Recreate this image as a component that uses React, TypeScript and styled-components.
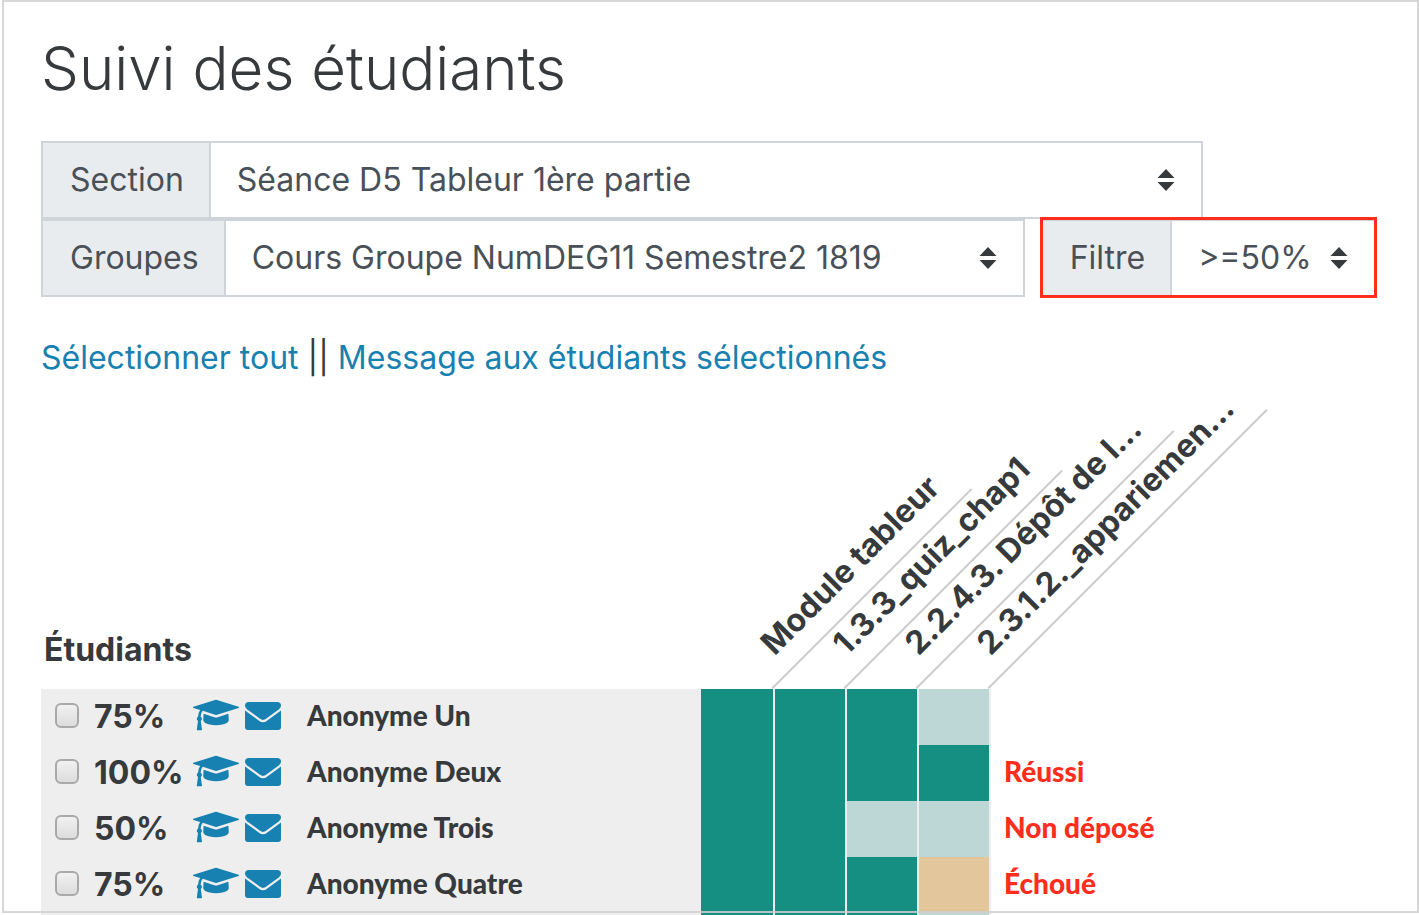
import React from "react";
import styled, { createGlobalStyle } from "styled-components";

const GlobalStyle = createGlobalStyle`
  *, *::before, *::after { box-sizing: border-box; }
  body {
    margin: 0;
    background: #fff;
    color: #373a3c;
    font-family: Inter, "Liberation Sans", sans-serif;
    font-size: 32px;
    line-height: 48px;
  }
`;

const Page = styled.main`
  position: relative;
  min-height: 100vh;
  padding: 29px 41px 0;
  overflow: hidden;

  &::after {
    content: "";
    position: absolute;
    inset: 0 0 2px 2px;
    border: 2px solid rgba(208, 208, 208, 0.85);
    pointer-events: none;
  }
`;

const Title = styled.h1`
  margin: 0 0 34px;
  font-size: 60px;
  font-weight: 300;
  line-height: 78px;
`;

const FilterRow = styled.div`
  display: flex;
  gap: 16px;
`;

const Group = styled.div<{ $marked?: boolean }>`
  position: relative;
  display: flex;
  height: 78px;

  &::after {
    content: "";
    display: ${(p) => (p.$marked ? "block" : "none")};
    position: absolute;
    inset: -2px -1px -1px;
    border: 3px solid #ff2d1c;
    pointer-events: none;
  }
`;

const GroupLabel = styled.label`
  display: flex;
  align-items: center;
  padding: 0 25px 0 27px;
  border: 2px solid #ced4da;
  border-right: 0;
  background: #e9ecef;
  color: #495057;
`;

const SelectBox = styled.div<{ $width: number }>`
  position: relative;
  width: ${(p) => p.$width}px;

  svg {
    position: absolute;
    top: 28px;
    right: 28px;
    pointer-events: none;
  }
`;

const Select = styled.select`
  width: 100%;
  height: 100%;
  padding: 0 26px;
  border: 2px solid #ced4da;
  border-radius: 0;
  appearance: none;
  background: #fff;
  color: #495057;
  font: inherit;
`;

const Actions = styled.nav`
  margin-top: 37px;
`;

const Action = styled.a`
  color: #1781b1;
  text-decoration: none;
`;

const Table = styled.table`
  width: 100%;
  table-layout: fixed;
  border-collapse: separate;
  border-spacing: 0;

  th, td { padding: 0; }
`;

const Col = styled.col<{ $width?: number }>`
  width: ${(p) => (p.$width ? `${p.$width}px` : "auto")};
`;

const StudentHeading = styled.th`
  height: 307px;
  vertical-align: bottom;
  text-align: left;
  font-weight: 700;

  span { display: block; padding: 0 0 15px 3px; }
`;

const ActivityHeading = styled.th`
  vertical-align: bottom;
  text-align: left;
  font-weight: 700;
`;

const SlantAnchor = styled.div`
  width: 0;
  margin: 0 2px 0 auto;
`;

const SlantLabel = styled.div`
  width: max-content;
  padding: 0 22px 7px 24px;
  border-bottom: 2px solid #ccc;
  white-space: nowrap;
  transform: rotate(-45deg);
  transform-origin: 0 100%;
`;

const Student = styled.div`
  display: flex;
  align-items: center;
  height: 56px;
  padding-left: 14px;
  background: #eee;
`;

const Check = styled.input`
  width: 24px;
  height: 25px;
  margin: 0 15px 3px 0;
  border: 2px solid #a9a9a9;
  border-radius: 6px;
  appearance: none;
  background: linear-gradient(#f1f1f1, #dcdcdc);
`;

const Percent = styled.span`
  width: 99px;
  font-weight: 700;
`;

const IconButton = styled.button`
  display: flex;
  margin: 0 6px 4px 0;
  padding: 0;
  border: 0;
  background: none;
  color: #1781b1;
`;

const Name = styled.span`
  margin: 0 0 4px 20px;
  font-family: Lato, sans-serif;
  font-size: 28px;
  font-weight: 900;
`;

const tones = { done: "#168f83", none: "#bdd7d7", failed: "#e3c69c" };
type Tone = keyof typeof tones;

const StatusCell = styled.td<{ $tone: Tone }>`
  border-right: 2px solid #eee;
  background: ${(p) => tones[p.$tone]};
`;

const Note = styled.td`
  color: #ff2d1c;
  font-family: Lato, sans-serif;
  font-size: 28px;
  font-weight: 900;

  span { display: block; padding: 0 0 5px 13px; }
`;

const Strip = styled.td`
  height: 2px;
  background: #eee;
`;

function Sorter() {
  return (
    <svg width="18" height="22" viewBox="0 0 18 22" fill="#373a3c" aria-hidden="true">
      <path d="M9 0L17.5 9H.5zM9 22L.5 13h17z" />
    </svg>
  );
}

function GraduationCap() {
  return (
    <svg width="46" height="36" viewBox="0 0 2304 1792" fill="currentColor" aria-hidden="true">
      <path d="M1774 836l18 316q4 69-82 128t-235 93.5-323 34.5-323-34.5-235-93.5-82-128l18-316 574 181q22 7 48 7t48-7zM2304 512q0 23-22 31l-1120 352q-4 1-10 1t-10-1l-652-206q-43 34-71 111.5t-34 178.5q63 36 63 109 0 69-58 107l58 433q2 14-8 25-9 11-24 11h-192q-15 0-24-11-10-11-8-25l58-433q-58-38-58-107 0-73 65-111 11-207 98-330l-333-104q-22-8-22-31t22-31l1120-352q4-1 10-1t10 1l1120 352q22 8 22 31z" />
    </svg>
  );
}

function Envelope() {
  return (
    <svg width="36" height="36" viewBox="0 0 36 36" fill="currentColor" aria-hidden="true">
      <path d="M4 5H32Q36 5 36 8.5Q36 10.5 34 12.2L21 21.8Q18 24 15 21.8L2 12.2Q0 10.500 0 8.500Q0 5 4 5Z" />
      <path d="M0 13.400L14 23.800Q18 26.800 22 23.800L36 13.400V30Q36 33 33 33H3Q0 33 0 30Z" />
    </svg>
  );
}

interface FieldProps {
  id: string;
  label: string;
  value: string;
  width: number;
  marked?: boolean;
}

function Field({ id, label, value, width, marked }: FieldProps) {
  return (
    <Group $marked={marked}>
      <GroupLabel htmlFor={id}>{label}</GroupLabel>
      <SelectBox $width={width}>
        <Select id={id}>
          <option>{value}</option>
        </Select>
        <Sorter />
      </SelectBox>
    </Group>
  );
}

const activities = ["Module tableur", "1.3.3_quiz_chap1", "2.2.4.3. Dépôt de l...", "2.3.1.2._appariemen..."];

const students: { name: string; percent: string; cells: Tone[]; note: string }[] = [
  { name: "Anonyme Un", percent: "75%", cells: ["done", "done", "done", "none"], note: "" },
  { name: "Anonyme Deux", percent: "100%", cells: ["done", "done", "done", "done"], note: "Réussi" },
  { name: "Anonyme Trois", percent: "50%", cells: ["done", "done", "none", "none"], note: "Non déposé" },
  { name: "Anonyme Quatre", percent: "75%", cells: ["done", "done", "done", "failed"], note: "Échoué" },
];

const nextRow: Tone[] = ["done", "done", "done", "none"];

export default function App() {
  return (
    <>
      <GlobalStyle />
      <Page>
        <Title>Suivi des étudiants</Title>
        <FilterRow>
          <Field id="section" label="Section" value="Séance D5 Tableur 1ère partie" width={994} />
        </FilterRow>
        <FilterRow>
          <Field id="groups" label="Groupes" value="Cours Groupe NumDEG11 Semestre2 1819" width={801} />
          <Field id="filter" label="Filtre" value=">=50%" width={206} marked />
        </FilterRow>
        <Actions>
          <Action href="#all">Sélectionner tout</Action> || <Action href="#message">Message aux étudiants sélectionnés</Action>
        </Actions>
        <Table>
          <colgroup>
            <Col $width={660} />
            <Col $width={74} />
            <Col $width={72} />
            <Col $width={72} />
            <Col $width={72} />
            <Col />
          </colgroup>
          <thead>
            <tr>
              <StudentHeading scope="col">
                <span>Étudiants</span>
              </StudentHeading>
              {activities.map((a) => (
                <ActivityHeading scope="col" key={a}>
                  <SlantAnchor>
                    <SlantLabel>{a}</SlantLabel>
                  </SlantAnchor>
                </ActivityHeading>
              ))}
              <td />
            </tr>
          </thead>
          <tbody>
            {students.map((s) => (
              <tr key={s.name}>
                <td>
                  <Student>
                    <Check type="checkbox" aria-label={s.name} />
                    <Percent>{s.percent}</Percent>
                    <IconButton aria-label="Notes">
                      <GraduationCap />
                    </IconButton>
                    <IconButton aria-label="Message">
                      <Envelope />
                    </IconButton>
                    <Name>{s.name}</Name>
                  </Student>
                </td>
                {s.cells.map((tone, i) => (
                  <StatusCell key={i} $tone={tone} />
                ))}
                <Note>
                  <span>{s.note}</span>
                </Note>
              </tr>
            ))}
            <tr aria-hidden="true">
              <Strip />
              {nextRow.map((tone, i) => (
                <StatusCell key={i} $tone={tone} />
              ))}
            </tr>
          </tbody>
        </Table>
      </Page>
    </>
  );
}
